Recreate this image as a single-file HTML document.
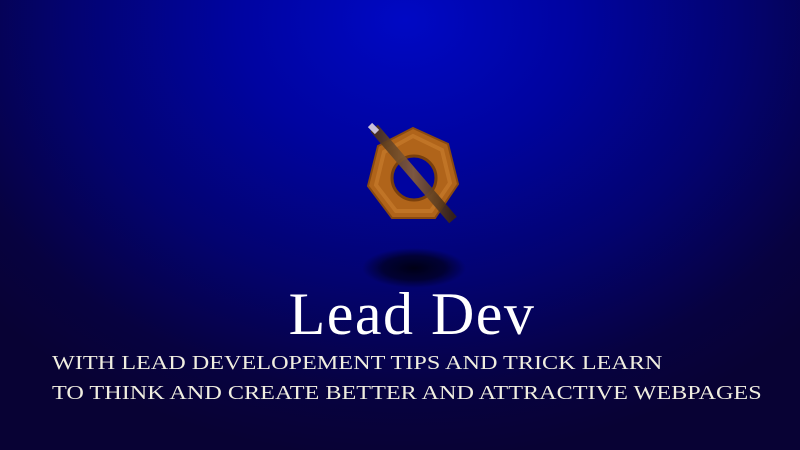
<!DOCTYPE html>
<html><head><style>
html,body{margin:0;padding:0}
body{width:800px;height:450px;overflow:hidden;position:relative;
background:radial-gradient(ellipse 560px 440px at 405px 20px,#0008c4 0%,#0004a0 30%,#030370 60%,#070240 85%,#080234 100%);
font-family:"Liberation Serif",serif;color:#f0eee0}
.t{position:absolute;left:0;width:824px;text-align:center;top:280px;font-size:60px;letter-spacing:1.5px;color:#fff}
.s{position:absolute;left:52px;font-size:20px;white-space:nowrap;transform-origin:0 0;transform:scaleX(1.21)}
</style></head><body>
<svg width="800" height="450" style="position:absolute;left:0;top:0">
<defs>
<radialGradient id="sh" cx="0.5" cy="0.5" r="0.5"><stop offset="0" stop-color="#000010" stop-opacity=".95"/><stop offset=".6" stop-color="#000018" stop-opacity=".7"/><stop offset="1" stop-color="#000020" stop-opacity="0"/></radialGradient>
<linearGradient id="st" x1="0" y1="0" x2="1" y2="0"><stop offset="0" stop-color="#4a3018"/><stop offset=".5" stop-color="#8a6038"/><stop offset="1" stop-color="#3a2410"/></linearGradient>
</defs>
<ellipse cx="414" cy="268" rx="52" ry="20" fill="url(#sh)"/>
<path d="M413 128 L448 144 L458 184 L435 218 L392 218 L368 186 L378 146 Z" fill="#b0641a" stroke="#8a4a10" stroke-width="2"/>
<path d="M413 136 L442 150 L450 183 L431 211 L396 211 L376 185 L384 152 Z" fill="none" stroke="#c87a2c" stroke-width="4" opacity=".7"/>
<circle cx="414" cy="178" r="22" fill="#0004a0" stroke="#7a400c" stroke-width="3"/>
<line x1="374" y1="128" x2="453" y2="220" stroke="url(#st)" stroke-width="10" opacity=".9"/>
<line x1="370" y1="125" x2="377" y2="132" stroke="#c8c0d8" stroke-width="6"/>
</svg>
<div class="t">Lead Dev</div>
<div class="s" style="top:352px">WITH LEAD DEVELOPEMENT TIPS AND TRICK LEARN</div>
<div class="s" style="top:382px">TO THINK AND CREATE BETTER AND ATTRACTIVE WEBPAGES</div>
</body></html>
